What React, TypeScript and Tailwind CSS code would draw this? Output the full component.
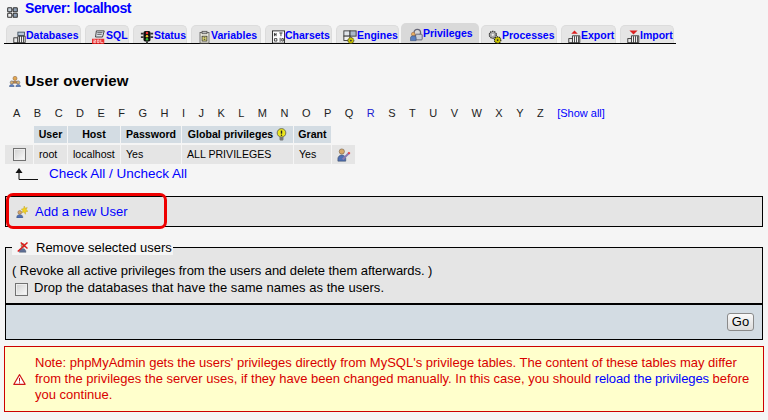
import React from 'react';

type IconProps = { className?: string };

function ServerIcon({ className }: IconProps) {
  return (
    <svg viewBox="0 0 16 16" className={className}>
      <rect x="1" y="1" width="6" height="6" rx="1" fill="#c9d2dc" stroke="#333" strokeWidth="1.500" />
      <rect x="9" y="1" width="6" height="6" rx="1" fill="#8fa1b5" stroke="#333" strokeWidth="1.500" />
      <rect x="1" y="9" width="6" height="6" rx="1" fill="#f0f0f0" stroke="#333" strokeWidth="1.500" />
      <rect x="9" y="9" width="6" height="6" rx="1" fill="#8fa1b5" stroke="#333" strokeWidth="1.500" />
      <path d="M7 4h2M7 12h2M4 7v2" stroke="#333" />
    </svg>
  );
}

function DbIcon({ className }: IconProps) {
  return (
    <svg viewBox="0 0 16 16" className={className}>
      <rect x="1" y="9" width="5" height="6" fill="#e8e8e8" stroke="#222" />
      <rect x="6" y="2" width="8" height="4" fill="#b9c8d8" stroke="#345" />
      <path d="M6 7h9v8H6z" fill="#f4f4f4" stroke="#222" />
      <path d="M8 7v8M10.500 7v8M13 7v8" stroke="#222" />
    </svg>
  );
}

function SqlIcon({ className }: IconProps) {
  return (
    <svg viewBox="0 0 16 16" className={className}>
      <path d="M5 1h9l-2 7H4z" fill="#dde3ea" stroke="#333" />
      <path d="M6 3h6M6 5h5" stroke="#555" />
      <rect x="0" y="10" width="14" height="6" fill="#ee1111" opacity="0.85" />
      <path d="M1.500 11.500h2.500v1.500H2v1.500h2.500M6 11.500h2v3H6zM10 11v3.500h3" stroke="#fff" strokeWidth="0.800" fill="none" />
    </svg>
  );
}

function StatusIcon({ className }: IconProps) {
  return (
    <svg viewBox="0 0 16 16" className={className}>
      <path d="M1 3h3v2H1zM12 3h3v2h-3zM1 7h3v2H1zM12 7h3v2h-3z" fill="#333" />
      <rect x="4" y="1" width="8" height="12" rx="2" fill="#111" />
      <rect x="7" y="13" width="2" height="3" fill="#222" />
      <circle cx="8" cy="3.500" r="1.400" fill="#e33" />
      <circle cx="8" cy="7" r="1.400" fill="#ec3" />
      <circle cx="8" cy="10.500" r="1.400" fill="#3b3" />
    </svg>
  );
}

function VariablesIcon({ className }: IconProps) {
  return (
    <svg viewBox="0 0 16 16" className={className}>
      <rect x="2.500" y="2.500" width="11" height="13" fill="#f3f1e4" stroke="#555" />
      <rect x="5" y="1" width="6" height="3" fill="#bbb" stroke="#555" />
      <rect x="5" y="7" width="6" height="6" fill="#e6e07a" stroke="#333" />
      <path d="M7 9h2M7 11h2" stroke="#333" />
    </svg>
  );
}

function CharsetsIcon({ className }: IconProps) {
  return (
    <svg viewBox="0 0 16 16" className={className}>
      <rect x="0.500" y="0.500" width="15" height="15" fill="#fff" stroke="#111" />
      <path d="M3 3v4M5 3v4M3 5h2M9 3h4M11 3v4M3 10h3v3H3zM10 9v5M12 10h2v3h-2z" stroke="#222" strokeWidth="1" fill="none" />
    </svg>
  );
}

function EnginesIcon({ className }: IconProps) {
  return (
    <svg viewBox="0 0 16 16" className={className}>
      <rect x="1" y="1" width="7" height="6" fill="#dfe3e8" stroke="#333" />
      <rect x="8" y="1" width="7" height="6" fill="#aab8c8" stroke="#333" />
      <rect x="1" y="7" width="7" height="5" fill="#f0f0f0" stroke="#333" />
      <circle cx="9" cy="12" r="3.400" fill="#c9c400" stroke="#333" strokeDasharray="1.500 0.700" />
      <circle cx="9" cy="12" r="1" fill="#333" />
    </svg>
  );
}

function PrivilegesIcon({ className }: IconProps) {
  return (
    <svg viewBox="0 0 16 16" className={className}>
      <circle cx="9" cy="5" r="4" fill="none" stroke="#667" strokeWidth="1.600" />
      <rect x="7" y="7" width="8" height="7" rx="1" fill="#c9ced6" stroke="#556" />
      <circle cx="4" cy="7" r="2.300" fill="#e8b060" stroke="#854" strokeWidth="0.600" />
      <path d="M0.500 15v-3c0-2 1.500-3 3.500-3s3.500 1 3.500 3v3z" fill="#5a7fc0" stroke="#346" strokeWidth="0.600" />
    </svg>
  );
}

function ProcessesIcon({ className }: IconProps) {
  return (
    <svg viewBox="0 0 16 16" className={className}>
      <circle cx="5.500" cy="5.500" r="4" fill="#aaa" stroke="#333" strokeWidth="1.400" strokeDasharray="1.600 0.900" />
      <circle cx="5.500" cy="5.500" r="1.300" fill="#eee" />
      <circle cx="11" cy="11.500" r="3.700" fill="#c9c400" stroke="#222" strokeWidth="1.300" strokeDasharray="1.500 0.800" />
      <circle cx="11" cy="11.500" r="1" fill="#222" />
    </svg>
  );
}

function TransferIcon({ className, color, up }: IconProps & { color: string; up: boolean }) {
  return (
    <svg viewBox="0 0 16 16" className={className}>
      <path d={up ? 'M8 0l4 4H4z' : 'M3 0h10L8 5z'} fill={color} />
      <rect x="1" y="10" width="5" height="5" fill="#e8e8e8" stroke="#222" />
      <path d="M5.500 6.500h9v8.500h-9z" fill="#f4f4f4" stroke="#222" />
      <path d="M8 7v8M10.500 7v8M13 7v8" stroke="#222" />
    </svg>
  );
}

function UsersIcon({ className }: IconProps) {
  return (
    <svg viewBox="0 0 16 16" className={className}>
      <circle cx="8" cy="4.500" r="2.700" fill="#e2a850" stroke="#754" strokeWidth="0.600" />
      <path d="M4 11c0-2 2-3 4-3s4 1 4 3z" fill="#c08840" stroke="#754" strokeWidth="0.600" />
      <circle cx="3.700" cy="10" r="2.200" fill="#d8b070" stroke="#457" strokeWidth="0.600" />
      <circle cx="12.300" cy="10" r="2.200" fill="#d8b070" stroke="#457" strokeWidth="0.600" />
      <path d="M0.500 15.500c0-2 1.500-3 3.200-3s3.200 1 3.200 3zM9.100 15.500c0-2 1.500-3 3.200-3s3.200 1 3.200 3z" fill="#5a7fc0" stroke="#346" strokeWidth="0.500" />
    </svg>
  );
}

function BulbIcon({ className }: IconProps) {
  return (
    <svg viewBox="0 0 14 16" className={className}>
      <circle cx="7" cy="6" r="5.500" fill="#e9e41c" stroke="#555" />
      <rect x="4.500" y="11" width="5" height="4.500" rx="1" fill="#777" />
      <path d="M7 3v4" stroke="#222" strokeWidth="1.800" />
      <circle cx="7" cy="9" r="0.900" fill="#222" />
    </svg>
  );
}

function EditUserIcon({ className }: IconProps) {
  return (
    <svg viewBox="0 0 16 16" className={className}>
      <circle cx="5.500" cy="4" r="3" fill="#d8a868" stroke="#654" strokeWidth="0.600" />
      <path d="M1 15v-3c0-2 2-4 4.500-4S10 10 10 12v3z" fill="#4f6fb5" stroke="#345" strokeWidth="0.600" />
      <path d="M6.500 13L14 5.500" stroke="#8a7bb0" strokeWidth="2.400" />
      <path d="M13 6.500l1.500-1.500" stroke="#e44" strokeWidth="2.400" />
    </svg>
  );
}

function AddUserIcon({ className }: IconProps) {
  return (
    <svg viewBox="0 0 16 16" className={className}>
      <path d="M11 0l1 3 3-1-1.500 3L16 7l-3 .5L12.500 11 10.500 8 8 9l1-3-2-2 3-.5z" fill="#f2d21f" stroke="#b89a10" strokeWidth="0.500" />
      <circle cx="5" cy="8.500" r="2.500" fill="#d8a868" stroke="#654" strokeWidth="0.600" />
      <path d="M1 16v-1.500C1 12.500 3 11.500 5 11.500s4 1 4 3V16z" fill="#4f6fb5" stroke="#345" strokeWidth="0.500" />
    </svg>
  );
}

function RemoveUserIcon({ className }: IconProps) {
  return (
    <svg viewBox="0 0 16 16" className={className}>
      <circle cx="8" cy="6" r="2.600" fill="#c9a078" stroke="#654" strokeWidth="0.600" />
      <path d="M3 15c0-3 2-5 4.500-5s4.500 2 4.500 5z" fill="#5f6f95" stroke="#345" strokeWidth="0.500" />
      <path d="M1 14L14 2M5 2l9 8" stroke="#dd1a1a" strokeWidth="2" />
    </svg>
  );
}

function WarnIcon({ className }: IconProps) {
  return (
    <svg viewBox="0 0 16 16" className={className}>
      <path d="M8 2L15 14H1z" fill="#fff" stroke="#d01818" strokeWidth="1.300" strokeLinejoin="round" />
      <path d="M8 6v4.500" stroke="#b01818" strokeWidth="1.300" />
      <path d="M8 11.500v1.300" stroke="#b01818" strokeWidth="1.300" />
    </svg>
  );
}

function FakeCheckbox({ className }: IconProps) {
  return (
    <span className={`block h-[13px] w-[13px] shrink-0 border border-[#717171] bg-gradient-to-br from-[#d0d0d0] to-[#fbfbfb] shadow-[inset_0_0_0_1px_#eee] ${className ?? ''}`} />
  );
}

const wide = 'h-[14px] w-[14px]';
const narrow = 'h-[14px] w-[13px]';

const tabs = [
  { label: 'Databases', width: 'w-[75px]', icon: <DbIcon className={narrow} /> },
  { label: 'SQL', width: 'w-[44px]', icon: <SqlIcon className={wide} /> },
  { label: 'Status', width: 'w-[54px]', icon: <StatusIcon className={wide} /> },
  { label: 'Variables', width: 'w-[70px]', icon: <VariablesIcon className={narrow} /> },
  { label: 'Charsets', width: 'w-[67px]', icon: <CharsetsIcon className={narrow} /> },
  { label: 'Engines', width: 'w-[63px]', icon: <EnginesIcon className={wide} /> },
  { label: 'Privileges', width: 'w-[78px]', icon: <PrivilegesIcon className={narrow} />, active: true },
  { label: 'Processes', width: 'w-[76px]', icon: <ProcessesIcon className={wide} /> },
  { label: 'Export', width: 'w-[55px]', icon: <TransferIcon className={narrow} color="#dd2222" up /> },
  { label: 'Import', width: 'w-[54px]', icon: <TransferIcon className={narrow} color="#dd2222" up={false} /> },
];

const letters = 'ABCDEFGHIJKLMNOPQRSTUVWXYZ'.split('');

const headCell = 'flex h-[17px] items-center justify-center bg-[#d3dce3] font-bold';
const rowCell = 'mt-[2px] flex h-[19px] items-center bg-[#e5e5e5] pl-[5px] pt-[1px]';

export default function App() {
  return (
    <div className="relative h-[420px] w-[768px] overflow-hidden bg-[#f5f5f5] font-['Liberation_Sans',Arial,sans-serif] text-[13px] text-black">
      {/* page title */}
      <div className="flex h-[23px] items-center pb-[6px] pl-[7px]">
        <ServerIcon className="mt-[7px] h-[11px] w-[11px]" />
        <span className="ml-[7px] text-[14px] font-bold tracking-[-0.45px] text-[#0000ff]">Server: localhost</span>
      </div>

      {/* tabs */}
      <div className="ml-[4px] flex h-[21px] w-[672px] items-end gap-[4px] border-b border-black pl-[2px]">
        {tabs.map((t) => (
          <div
            key={t.label}
            className={`flex ${t.width} shrink-0 items-start whitespace-nowrap rounded-t-[5px] text-[10.5px] font-bold text-[#0000ff] ${
              t.active
                ? 'mx-[-2px] h-[20px] bg-[#d9d9d9] pl-[9px] pt-[3px]'
                : 'h-[18px] border border-b-0 border-[#dcdcdc] bg-[#e5e5e5] pl-[6px] pt-[2px]'
            }`}
          >
            <span className="mt-[2px] shrink-0">{t.icon}</span>
            <span className="leading-[14px]">{t.label}</span>
          </div>
        ))}
      </div>

      {/* heading */}
      <div className="mt-[27px] flex items-center pl-[9px]">
        <UsersIcon className="h-[12px] w-[12px]" />
        <span className="ml-[4px] text-[15px] font-bold leading-[20px] tracking-[0.15px]">User overview</span>
      </div>

      {/* alphabet */}
      <div className="mt-[15px] flex h-[14px] items-center gap-[13.48px] pl-[13px] text-[11px] leading-[14px]">
        {letters.map((l) => (
          <span key={l} className={l === 'R' ? 'text-[#2020d0]' : 'text-[#222]'}>
            {l}
          </span>
        ))}
        <span className="text-[#0000ff]">[Show all]</span>
      </div>

      {/* user table */}
      <div className="ml-[5px] mt-[6px] grid w-[350px] grid-cols-[28px_33px_52px_60px_111px_37px_23px] gap-x-[1px] text-[10.6px]">
        <span />
        <div className={headCell}>User</div>
        <div className={headCell}>Host</div>
        <div className={headCell}>Password</div>
        <div className={`${headCell} gap-[3px]`}>
          Global privileges
          <BulbIcon className="h-[13px] w-[11px]" />
        </div>
        <div className={headCell}>Grant</div>
        <span />
        <div className="mt-[2px] flex h-[19px] items-center justify-center bg-[#e5e5e5]">
          <FakeCheckbox />
        </div>
        <div className={rowCell}>root</div>
        <div className={rowCell}>localhost</div>
        <div className={rowCell}>Yes</div>
        <div className={rowCell}>ALL PRIVILEGES</div>
        <div className={rowCell}>Yes</div>
        <div className="mt-[2px] flex h-[19px] items-center justify-center bg-[#e5e5e5]">
          <EditUserIcon className="h-[14px] w-[14px]" />
        </div>
      </div>

      {/* check all */}
      <div className="mt-[1px] flex h-[17px] items-center pl-[15px] text-[13.5px] leading-[17px] text-[#0000ff]">
        <svg viewBox="0 0 24 14" className="h-[14px] w-[24px] shrink-0">
          <path d="M4 4v8.500h19" fill="none" stroke="#111" strokeWidth="1" />
          <path d="M4 1L7.500 6H0.500z" fill="#111" />
        </svg>
        <span className="ml-[10px]">Check All / Uncheck All</span>
      </div>

      {/* add user */}
      <div className="relative ml-[5px] mt-[14px] flex h-[31px] w-[758px] items-center border border-black bg-[#e5e5e5] pl-[10px] text-[#0000ff]">
        <AddUserIcon className="h-[12px] w-[12px]" />
        <span className="ml-[7px]">Add a new User</span>
        <div className="absolute left-0 top-[-4px] h-[36px] w-[161px] rounded-[7px] border-[3px] border-[#ee0000]" />
      </div>

      {/* remove users */}
      <div className="relative ml-[5px] mt-[20px] h-[58px] w-[758px] border border-b-2 border-black bg-[#e5e5e5] px-[6px] pt-[14px] leading-[17px]">
        <div className="absolute left-[6px] top-[-9px] flex h-[16px] items-center bg-[#f5f5f5] pl-[5px] pr-[1px]">
          <RemoveUserIcon className="h-[12px] w-[12px]" />
          <span className="ml-[7px]">Remove selected users</span>
        </div>
        <div className="tracking-[-0.05px]">( Revoke all active privileges from the users and delete them afterwards. )</div>
        <div className="flex items-start">
          <FakeCheckbox className="ml-[3px] mt-[4px]" />
          <span className="ml-[6px] tracking-[0.03px]">Drop the databases that have the same names as the users.</span>
        </div>
      </div>
      <div className="ml-[5px] flex h-[35px] w-[758px] items-center justify-end border border-t-0 border-black bg-[#d3dce3] pr-[8px]">
        <button className="h-[18px] w-[27px] rounded-[3px] border border-[#8a8a8a] bg-gradient-to-b from-[#fafafa] to-[#dcdcdc] text-[13px] leading-[14px]">Go</button>
      </div>

      {/* warning */}
      <div className="ml-[4px] mt-[6px] flex h-[66px] w-[760px] items-center border border-[#cc0000] bg-[#ffffcc] pl-[8px] pr-[8px] leading-[16px] text-[#d80000]">
        <WarnIcon className="mr-[9px] h-[13px] w-[13px] shrink-0" />
        <div className="whitespace-nowrap">
          <div>Note: phpMyAdmin gets the users' privileges directly from MySQL's privilege tables. The content of these tables may differ</div>
          <div className="flex gap-[3.5px]">
            <span>from the privileges the server uses, if they have been changed manually. In this case, you should</span>
            <span className="tracking-[-0.1px] text-[#0000ff]">reload the privileges</span>
            <span>before</span>
          </div>
          <div>you continue.</div>
        </div>
      </div>
    </div>
  );
}
